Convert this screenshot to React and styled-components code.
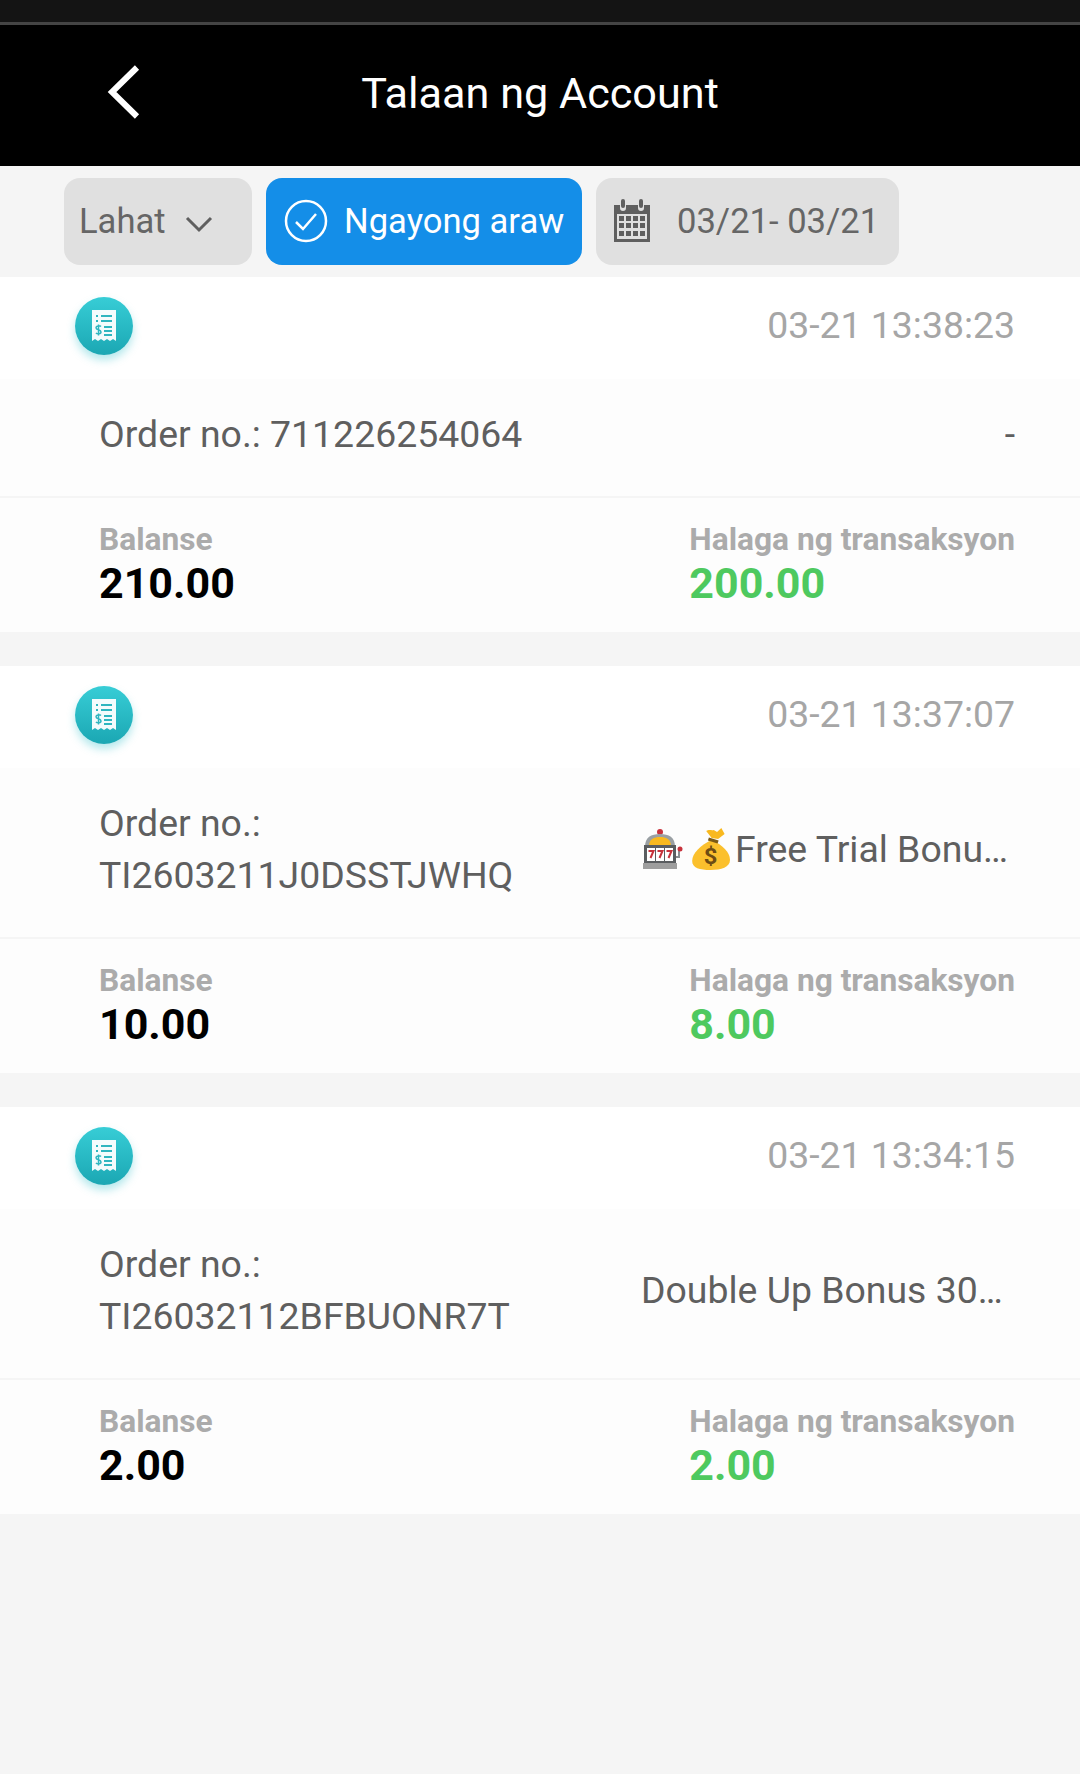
import React from "react";
import styled, { createGlobalStyle } from "styled-components";

const records = [
  {
    time: "03-21 13:38:23",
    order: "Order no.: 711226254064",
    note: "-",
    balance: "210.00",
    amount: "200.00",
  },
  {
    time: "03-21 13:37:07",
    order: "Order no.: TI2603211J0DSSTJWHQ",
    note: "Free Trial Bonus Reward",
    emoji: true,
    tall: true,
    balance: "10.00",
    amount: "8.00",
  },
  {
    time: "03-21 13:34:15",
    order: "Order no.: TI26032112BFBUONR7T",
    note: "Double Up Bonus 30% Reward",
    tall: true,
    balance: "2.00",
    amount: "2.00",
  },
];

const ReceiptIcon = () => (
  <svg width="30" height="34" viewBox="0 0 30 34">
    <path
      d="M3 1h24v31l-3-2-3 2-3-2-3 2-3-2-3 2-3-2-3 2z"
      fill="#fff"
      opacity="0.95"
    />
    <g stroke="#2fb6c0" strokeWidth="2" fill="none">
      <path d="M7 7h2M12 7h11M7 12h2M12 12h11M15 18h8M15 22h8M15 26h8" />
      <path
        d="M12 17.5c-1-1-5-1-5 1.2 0 2.6 5 1.6 5 4.2 0 2.300-4 2.300-5 1M9.500 15.500v11"
        strokeWidth="1.500"
      />
    </g>
  </svg>
);

const SlotEmoji = () => (
  <svg width="44" height="44" viewBox="0 0 44 44">
    <circle cx="19" cy="5" r="3" fill="#c8323c" />
    <path d="M4 20C4 10 10 7 19 7s15 3 15 13z" fill="#9aa0a4" />
    <path d="M8 19c0-7 5-9 11-9s11 2 11 9z" fill="#f9b91f" />
    <rect x="3" y="18" width="32" height="22" fill="#5a5d60" />
    <rect x="6" y="21" width="8" height="13" fill="#fff" />
    <rect x="15" y="21" width="8" height="13" fill="#fff" />
    <rect x="24" y="21" width="8" height="13" fill="#fff" />
    <g stroke="#c8323c" strokeWidth="2" fill="none">
      <path d="M7.500 24h5l-3 7M16.500 24h5l-3 7M25.500 24h5l-3 7" />
    </g>
    <rect x="2" y="36" width="34" height="6" fill="#9e9e9e" />
    <path d="M35 30h3v-7" stroke="#8a8d90" strokeWidth="2" fill="none" />
    <circle cx="39" cy="22" r="2.500" fill="#c8323c" />
  </svg>
);

const BagEmoji = () => (
  <svg width="40" height="44" viewBox="0 0 37 44" preserveAspectRatio="none">
    <path
      d="M20 13C10 18 2 26 2 34c0 7 7 9 17 9s18-3 18-10c0-8-7-15-17-20z"
      fill="#fbc02d"
    />
    <path
      d="M20 11l-5-7c3-2 5 0 7-1l3 2 4-4 3 6-6 5z"
      fill="#f9b91f"
    />
    <path d="M17 12l9 3" stroke="#7a5a17" strokeWidth="3" />
    <text
      x="19"
      y="37"
      fontFamily="Roboto, sans-serif"
      fontWeight="700"
      fontSize="22"
      fill="#6d4c14"
      textAnchor="middle"
    >
      $
    </text>
  </svg>
);

const App = () => {
  return (
    <Page>
      <GlobalStyle />
      <StatusBar />
      <Header>
        <BackButton>
          <svg width="34" height="56" viewBox="0 0 34 56">
            <path d="M30 3.500L5 28l25 24.500" stroke="#fff" strokeWidth="6" fill="none" />
          </svg>
        </BackButton>
        <Title>Talaan ng Account</Title>
      </Header>
      <FilterBar>
        <SelectPill>
          Lahat
          <Chevron width="28" height="18" viewBox="0 0 28 18">
            <path d="M2 3l12 12L26 3" stroke="#5f5f5f" strokeWidth="3" fill="none" />
          </Chevron>
        </SelectPill>
        <TodayPill>
          <svg width="44" height="44" viewBox="0 0 44 44">
            <circle cx="22" cy="22" r="20" stroke="#fff" strokeWidth="2.500" fill="none" />
            <path d="M12 23l7 7 13-15" stroke="#fff" strokeWidth="2.500" fill="none" />
          </svg>
          Ngayong araw
        </TodayPill>
        <DatePill>
          <svg width="38" height="44" viewBox="0 0 38 44">
            <path
              d="M1 6h6v3a3 3 0 0 0 6 0V6h12v3a3 3 0 0 0 6 0V6h6v37H1z"
              fill="#5f5f5f"
            />
            <rect x="8" y="0" width="4" height="9" rx="2" fill="#5f5f5f" />
            <rect x="26" y="0" width="4" height="9" rx="2" fill="#5f5f5f" />
            <rect x="4" y="15" width="30" height="25" fill="#e0e0e0" />
            <g fill="#5f5f5f">
              {[17, 24, 32].map((y) =>
                [6, 13, 20, 27].map((x) => (
                  <rect key={`${x}-${y}`} x={x} y={y} width="5" height="5" />
                ))
              )}
            </g>
          </svg>
          <DateText>03/21- 03/21</DateText>
        </DatePill>
      </FilterBar>
      <List>
        {records.map((item) => (
          <Card key={item.time}>
            <CardTop>
              <IconCircle>
                <ReceiptIcon />
              </IconCircle>
              <Time>{item.time}</Time>
            </CardTop>
            <OrderRow $tall={item.tall}>
              <OrderNo $tall={item.tall}>{item.order}</OrderNo>
              <Note $wide={!!item.emoji || item.tall}>
                {item.emoji && (
                  <Emojis>
                    <SlotEmoji />
                    <BagEmoji />
                  </Emojis>
                )}
                {item.note}
              </Note>
            </OrderRow>
            <Stats>
              <Stat>
                <StatLabel>Balanse</StatLabel>
                <StatValue>{item.balance}</StatValue>
              </Stat>
              <Stat>
                <StatLabel>Halaga ng transaksyon</StatLabel>
                <StatValue $green>{item.amount}</StatValue>
              </Stat>
            </Stats>
          </Card>
        ))}
      </List>
    </Page>
  );
};

const GlobalStyle = createGlobalStyle`
  html, body {
    margin: 0;
    padding: 0;
    background: #f5f5f5;
  }
  * {
    box-sizing: border-box;
  }
`;

const Page = styled.div`
  width: 1080px;
  height: 1774px;
  overflow: hidden;
  background: #f5f5f5;
  font-family: Roboto, "Liberation Sans", sans-serif;
`;

const StatusBar = styled.div`
  height: 25px;
  background: #141414;
  border-bottom: 3px solid #444;
`;

const Header = styled.header`
  position: relative;
  height: 141px;
  padding-bottom: 4px;
  background: #000;
  display: flex;
  align-items: center;
  justify-content: center;
`;

const BackButton = styled.div`
  position: absolute;
  left: 107px;
  top: 39px;
  display: flex;
`;

const Title = styled.h1`
  margin: 0;
  color: #fff;
  font-size: 43.2px;
  font-weight: 400;
`;

const FilterBar = styled.div`
  height: 111px;
  padding: 12px 0 0 64px;
  display: flex;
  gap: 14px;
`;

const Pill = styled.div`
  height: 87px;
  padding-bottom: 2px;
  border-radius: 16px;
  display: flex;
  align-items: center;
  font-size: 34.6px;
`;

const SelectPill = styled(Pill)`
  width: 188px;
  padding-left: 15px;
  gap: 18px;
  background: #e0e0e0;
  color: #666;
`;

const Chevron = styled.svg`
  margin-top: 6px;
  margin-left: 1px;
`;

const TodayPill = styled(Pill)`
  width: 316px;
  padding-left: 18px;
  gap: 16px;
  background: #148ee8;
  color: #fff;
`;

const DatePill = styled(Pill)`
  width: 303px;
  padding-left: 17px;
  gap: 26px;
  background: #e0e0e0;
  color: #666;
`;

const DateText = styled.span`
  white-space: nowrap;
`;

const List = styled.div`
  display: flex;
  flex-direction: column;
  gap: 34px;
`;

const Card = styled.section`
  background: #fdfdfd;
`;

const CardTop = styled.div`
  height: 102px;
  background: #fff;
  padding: 20px 65px 0 75px;
  display: flex;
  justify-content: space-between;
  align-items: flex-start;
`;

const IconCircle = styled.div`
  width: 58px;
  height: 58px;
  border-radius: 50%;
  background: linear-gradient(#37cdd6, #1ba7b3);
  box-shadow: 0 5px 8px rgba(40, 190, 200, 0.35);
  display: flex;
  align-items: center;
  justify-content: center;
`;

const Time = styled.div`
  padding-top: 6.5px;
  font-size: 37.4px;
  line-height: 42px;
  color: #a6a6a6;
`;

const OrderRow = styled.div`
  min-height: ${(p) => (p.$tall ? "171px" : "119px")};
  padding: 0 65px 8px 99px;
  display: flex;
  align-items: center;
  justify-content: space-between;
  border-bottom: 2px solid #f5f5f5;
  font-size: 37.4px;
  line-height: 52px;
  color: #5f5f5f;
`;

const OrderNo = styled.div`
  width: ${(p) => (p.$tall ? "440px" : "auto")};
`;

const Note = styled.div`
  width: ${(p) => (p.$wide ? "374px" : "auto")};
  white-space: nowrap;
  overflow: hidden;
  text-overflow: ellipsis;
`;

const Emojis = styled.span`
  display: inline-flex;
  gap: 5px;
  vertical-align: middle;
  margin-top: -6px;
  margin-right: 5px;
`;

const Stats = styled.div`
  height: 134px;
  padding: 24px 65px 0 99px;
  display: flex;
  justify-content: space-between;
`;

const Stat = styled.div`
  display: flex;
  flex-direction: column;
`;

const StatLabel = styled.div`
  font-size: 31.7px;
  line-height: 36px;
  font-weight: 700;
  color: #ababab;
`;

const StatValue = styled.div`
  font-size: 43px;
  line-height: 50px;
  font-weight: 700;
  color: ${(p) => (p.$green ? "#4ec95f" : "#000")};
`;

export default App;
